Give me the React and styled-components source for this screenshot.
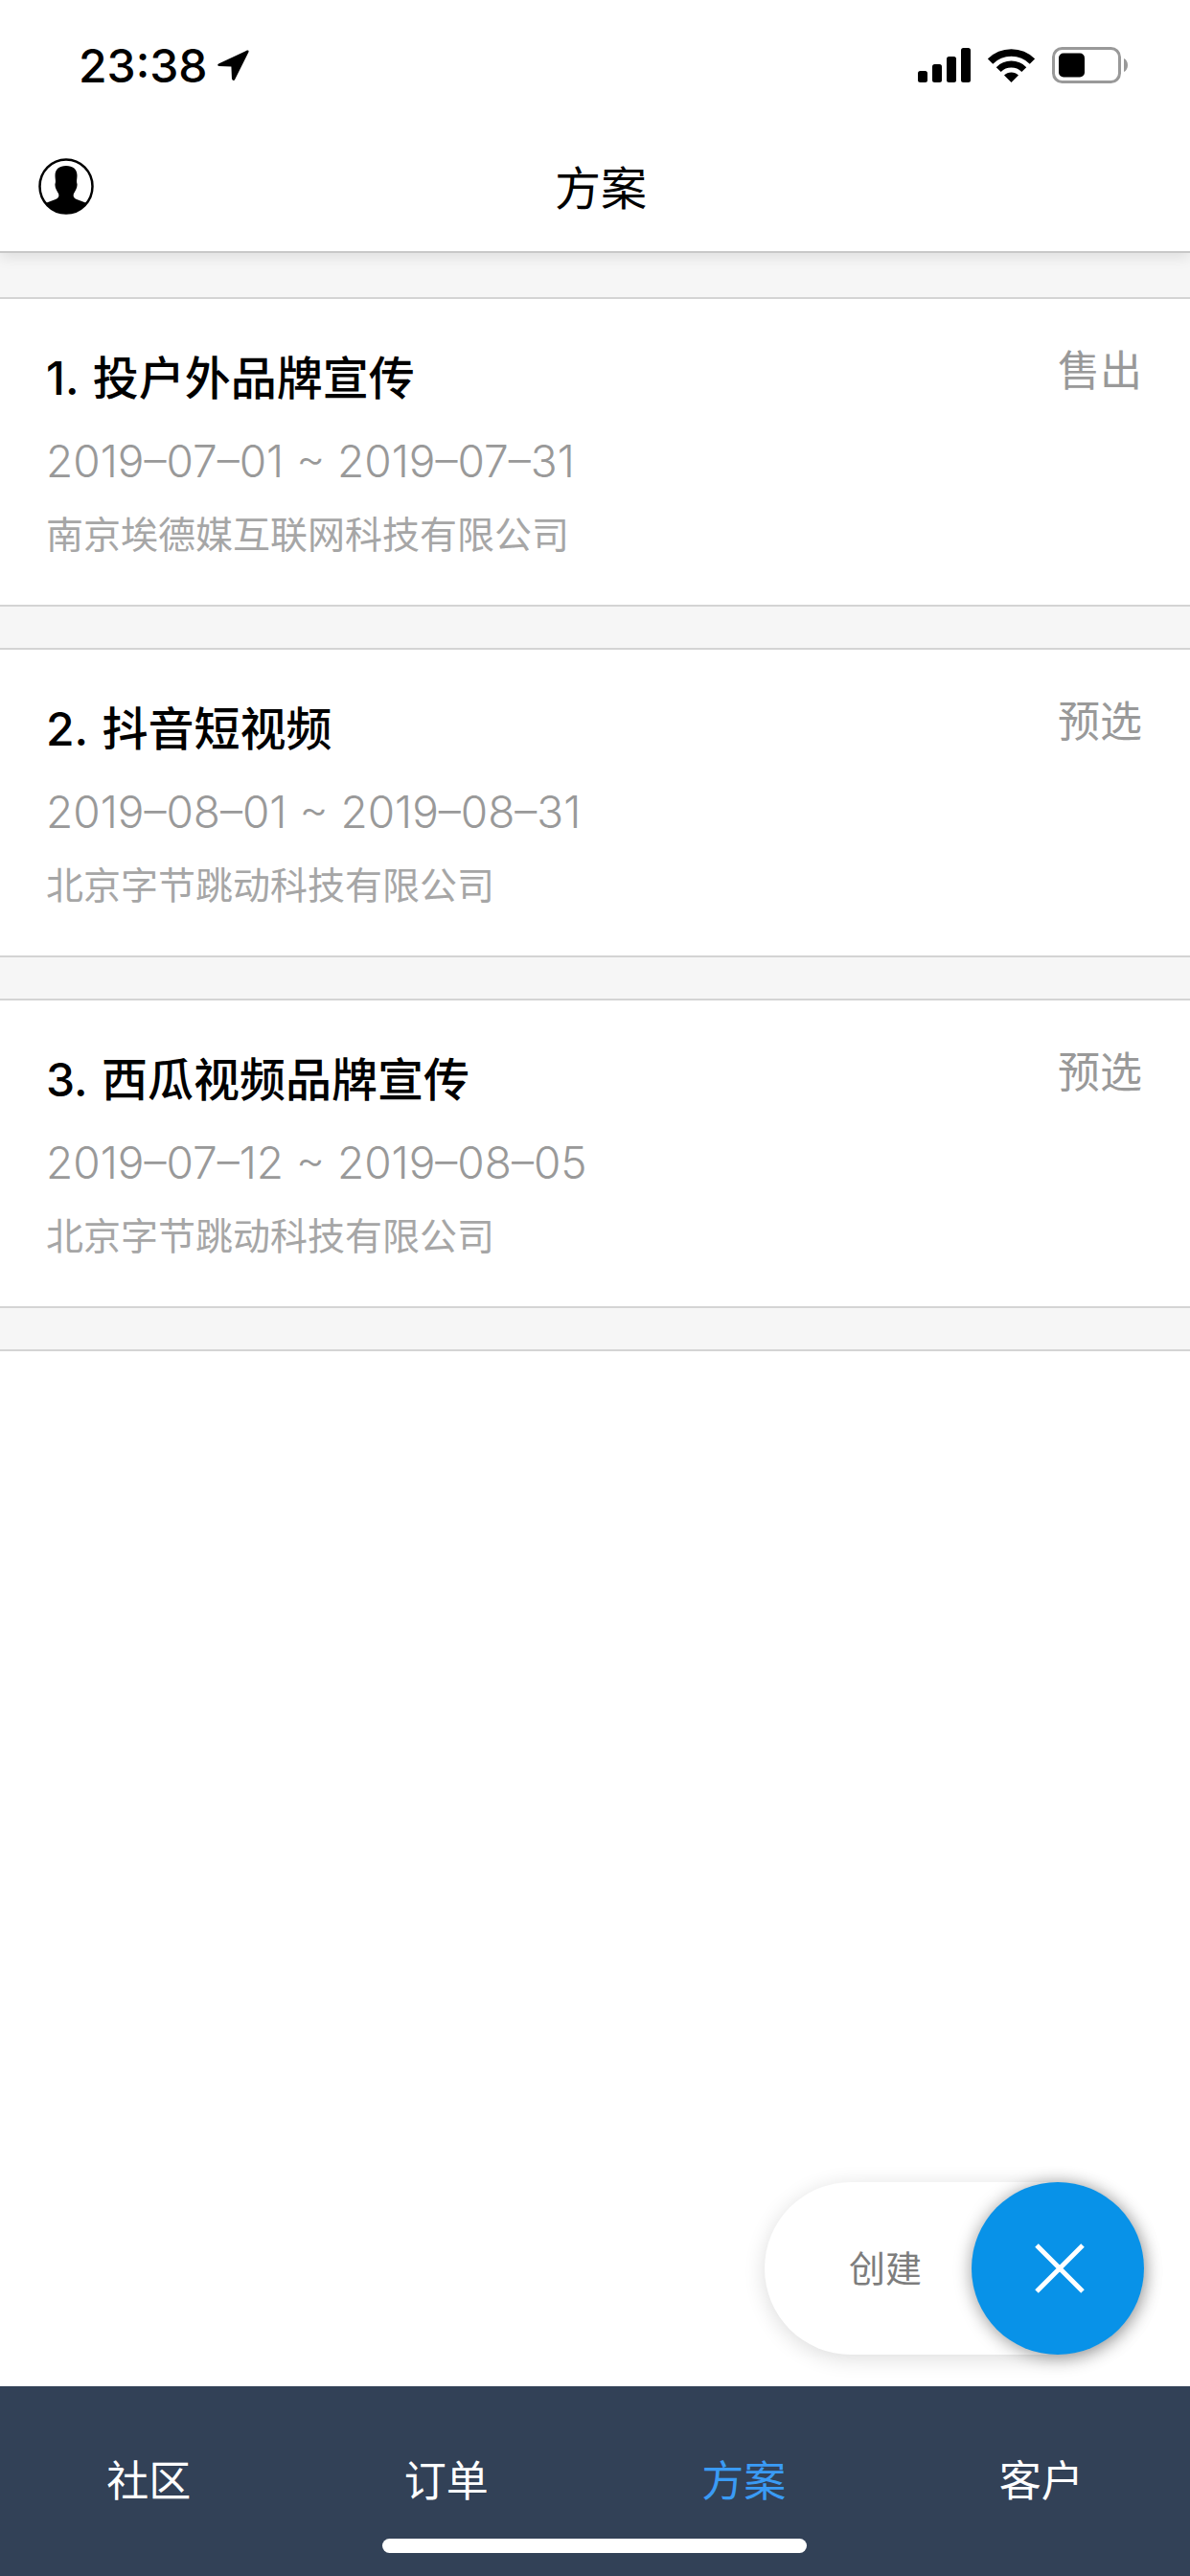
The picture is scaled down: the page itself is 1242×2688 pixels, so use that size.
import React from 'react'
import styled, { createGlobalStyle } from 'styled-components'

const GlobalStyle = createGlobalStyle`
    html, body {
        margin: 0;
        padding: 0;
        background: #fff;
    }
    body {
        font-family: Inter, "Noto Sans CJK SC", sans-serif;
    }
`

const Page = styled.div`
    position: relative;
    width: 1242px;
    height: 2688px;
    display: flex;
    flex-direction: column;
    overflow: hidden;
    background: #fff;
`

const StatusBar = styled.div`
    position: relative;
    z-index: 2;
    height: 84px;
    padding: 50px 65px 0 82px;
    display: flex;
    justify-content: space-between;
    align-items: flex-start;
    background: #fff;
`
const Clock = styled.div`
    display: flex;
    align-items: center;
    gap: 9px;
    height: 36px;
    font-size: 48px;
    font-weight: 500;
    color: #000;
`
const StatusIcons = styled.div`
    display: flex;
    align-items: center;
    gap: 18px;
    height: 36px;
`

const NavBar = styled.div`
    position: relative;
    z-index: 1;
    height: 130px;
    padding: 0 28px 8px 40px;
    box-sizing: border-box;
    display: grid;
    grid-template-columns: 1fr auto 1fr;
    align-items: center;
    background: #fff;
    border-bottom: 2px solid #c8c8c8;
    box-shadow: 0 4px 14px rgba(0, 0, 0, 0.1);
`
const NavTitle = styled.div`
    font-size: 48px;
    line-height: 60px;
    color: #000;
    padding-top: 5px;
`

const List = styled.div`
    background: #f6f6f6;
    padding-top: 46px;
    border-bottom: 2px solid #d4d4d4;
`
const Card = styled.div`
    height: 323px;
    box-sizing: border-box;
    margin-bottom: 43px;
    padding: 48px 50px 0 48px;
    background: #fff;
    border-top: 2px solid #d4d4d4;
    border-bottom: 2px solid #d4d4d4;
`
const CardHead = styled.div`
    display: flex;
    justify-content: space-between;
    align-items: flex-start;
`
const CardTitle = styled.div`
    padding-top: 2px;
    font-size: 48px;
    line-height: 66px;
    font-weight: 500;
    word-spacing: 2px;
    color: #000;
`
const CardStatus = styled.div`
    font-size: 44px;
    line-height: 54px;
    color: #999;
`
const CardDate = styled.div`
    margin-top: 23px;
    font-size: 46px;
    line-height: 60px;
    font-weight: 300;
    color: #999;
`
const CardCompany = styled.div`
    margin-top: 22px;
    font-size: 39px;
    line-height: 50px;
    color: #a6a6a6;
`

const Spacer = styled.div`
    flex: 1;
`

const FabGroup = styled.div`
    position: absolute;
    left: 798px;
    top: 2277px;
    width: 396px;
    height: 180px;
    display: flex;
    align-items: center;
    border-radius: 90px;
    background: #fff;
    box-shadow: 0 4px 22px rgba(0, 0, 0, 0.14);
`
const FabLabel = styled.div`
    margin-left: 88px;
    padding-bottom: 6px;
    font-size: 38px;
    color: #7d7d7d;
`
const FabButton = styled.div`
    position: absolute;
    right: 0;
    top: 0;
    width: 180px;
    height: 180px;
    box-sizing: border-box;
    padding-left: 4px;
    display: flex;
    align-items: center;
    justify-content: center;
    border-radius: 50%;
    background: #0892e8;
    box-shadow: 0 2px 18px rgba(0, 0, 0, 0.4);
`

const TabBar = styled.div`
    position: relative;
    height: 198px;
    display: grid;
    grid-template-columns: repeat(4, 1fr);
    background: #324157;
`
const TabItem = styled.div`
    padding-top: 64px;
    text-align: center;
    font-size: 44px;
    line-height: 70px;
    color: ${props => (props.active ? '#3a9bf5' : '#fff')};
`
const HomeIndicator = styled.div`
    position: absolute;
    left: 399px;
    top: 159px;
    width: 443px;
    height: 15px;
    border-radius: 8px;
    background: #fff;
`

const projects = [
    { title: '1. 投户外品牌宣传', status: '售出', date: '2019–07–01 ~ 2019–07–31', company: '南京埃德媒互联网科技有限公司' },
    { title: '2. 抖音短视频', status: '预选', date: '2019–08–01 ~ 2019–08–31', company: '北京字节跳动科技有限公司' },
    { title: '3. 西瓜视频品牌宣传', status: '预选', date: '2019–07–12 ~ 2019–08–05', company: '北京字节跳动科技有限公司' },
]

const tabs = ['社区', '订单', '方案', '客户']

const LocationIcon = () => (
    <svg width="34" height="34" viewBox="0 0 32 32">
        <path
            d="M30 1.5 L2 14.5 C0.5 15.5 1 17 2.500 17 L14.500 17.500 L15 29 C15.500 31.500 17.500 31.500 18 30 L31.500 3 C32 1.500 31 1 30 1.500 Z"
            fill="#000"
        />
    </svg>
)

const SignalIcon = () => (
    <svg width="55" height="36" viewBox="0 0 55 36" fill="#000">
        <rect x="0" y="24" width="10" height="12" rx="2.500" />
        <rect x="15" y="17" width="10" height="19" rx="2.500" />
        <rect x="30" y="9" width="10" height="27" rx="2.500" />
        <rect x="45" y="0" width="10" height="36" rx="2.500" />
    </svg>
)

const WifiIcon = () => (
    <svg width="49" height="36" viewBox="0 0 49 36">
        <path d="M2.600 14 A31 31 0 0 1 46.400 14" fill="none" stroke="#000" strokeWidth="7.500" />
        <path d="M11.200 22.600 A18.800 18.800 0 0 1 37.800 22.600" fill="none" stroke="#000" strokeWidth="7" />
        <path d="M24.500 36 L17 28.500 A10.600 10.600 0 0 1 32 28.500 Z" fill="#000" />
    </svg>
)

const BatteryIcon = () => (
    <svg width="79" height="38" viewBox="0 0 79 38">
        <rect x="1.500" y="1.500" width="69" height="35" rx="9" fill="none" stroke="#999" strokeWidth="3" />
        <rect x="7" y="6.500" width="27" height="25" rx="5" fill="#000" />
        <path d="M75 12 C77.500 13 79 16 79 19 C79 22 77.500 25 75 26 Z" fill="#999" />
    </svg>
)

const AvatarIcon = () => (
    <svg width="58" height="59" viewBox="0 0 58 59">
        <defs>
            <clipPath id="avatar-clip">
                <ellipse cx="29" cy="29.500" rx="27.500" ry="28" />
            </clipPath>
        </defs>
        <g clipPath="url(#avatar-clip)">
            <path
                d="M29 8 C36 8 40.500 11.500 40.500 18 C40.500 22 39.500 24 40.500 27 C41 31 38.500 34 37 37 C36 40 37 41.500 40 43 L52 47.500 L58 59 L0 59 L6 47.500 L18 43 C21 41.500 22 40 21 37 C19.500 34 17 31 17.500 27 C18.500 24 17.500 22 17.500 18 C17.500 11.500 22 8 29 8 Z"
                fill="#000"
            />
        </g>
        <ellipse cx="29" cy="29.500" rx="27.500" ry="28" fill="none" stroke="#000" strokeWidth="2.500" />
    </svg>
)

const CloseIcon = () => (
    <svg width="52" height="52" viewBox="0 0 52 52">
        <path d="M2 2 L50 50 M50 2 L2 50" stroke="#fff" strokeWidth="5" fill="none" />
    </svg>
)

export default function App() {
    return (
        <Page>
            <GlobalStyle />
            <StatusBar>
                <Clock>
                    23:38
                    <LocationIcon />
                </Clock>
                <StatusIcons>
                    <SignalIcon />
                    <WifiIcon />
                    <BatteryIcon />
                </StatusIcons>
            </StatusBar>
            <NavBar>
                <AvatarIcon />
                <NavTitle>方案</NavTitle>
            </NavBar>
            <List>
                {projects.map(item => (
                    <Card key={item.title}>
                        <CardHead>
                            <CardTitle>{item.title}</CardTitle>
                            <CardStatus>{item.status}</CardStatus>
                        </CardHead>
                        <CardDate>{item.date}</CardDate>
                        <CardCompany>{item.company}</CardCompany>
                    </Card>
                ))}
            </List>
            <Spacer />
            <FabGroup>
                <FabLabel>创建</FabLabel>
                <FabButton>
                    <CloseIcon />
                </FabButton>
            </FabGroup>
            <TabBar>
                {tabs.map(name => (
                    <TabItem key={name} active={name === '方案'}>{name}</TabItem>
                ))}
                <HomeIndicator />
            </TabBar>
        </Page>
    )
}
